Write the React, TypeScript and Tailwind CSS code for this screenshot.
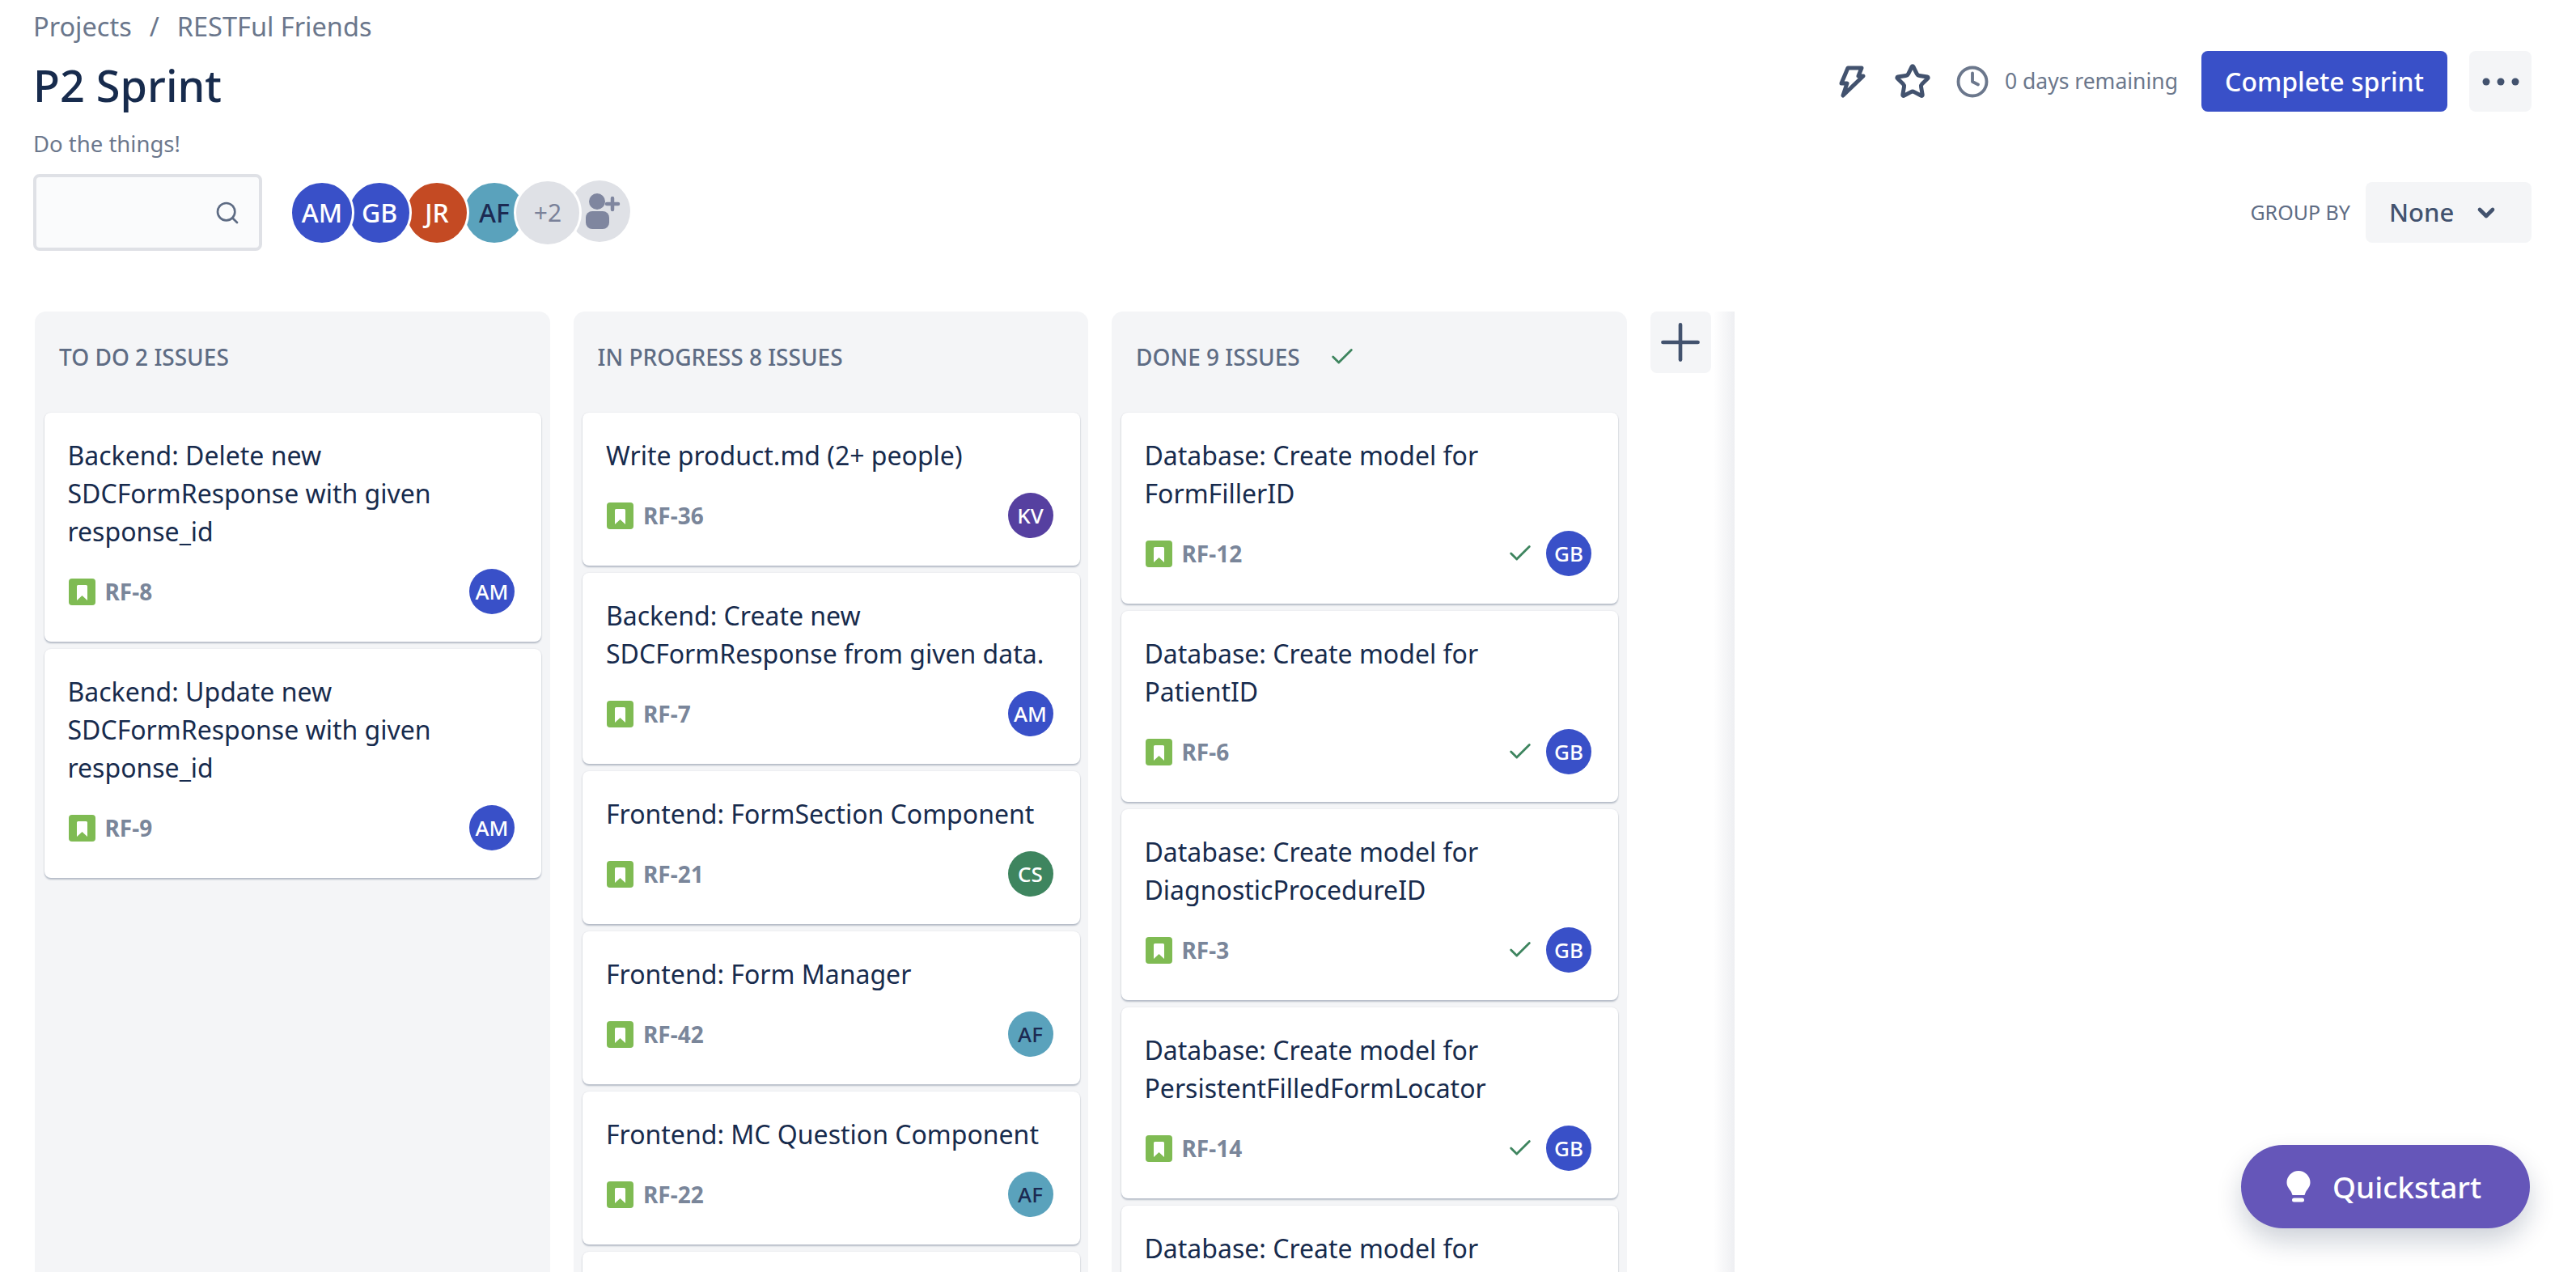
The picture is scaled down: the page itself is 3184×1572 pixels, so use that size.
import { Check, ChevronDown, Clock, Plus, Search, Star } from "lucide-react";

type Person = "AM" | "GB" | "JR" | "AF" | "KV" | "CS";

// the last card of a column runs off the page, so it has no footer here
interface Issue {
  title: string[];
  id?: string;
  who?: Person;
}

const avatarColors: Record<Person, string> = {
  AM: "bg-[#3950c8] text-white",
  GB: "bg-[#3950c8] text-white",
  JR: "bg-[#c44a23] text-white",
  AF: "bg-[#5aa2bc] text-[#1c2a52]",
  KV: "bg-[#5640a0] text-white",
  CS: "bg-[#3e855f] text-white",
};

const columns: { name: string; done?: boolean; issues: Issue[] }[] = [
  {
    name: "TO DO 2 ISSUES",
    issues: [
      { title: ["Backend: Delete new", "SDCFormResponse with given", "response_id"], id: "RF-8", who: "AM" },
      { title: ["Backend: Update new", "SDCFormResponse with given", "response_id"], id: "RF-9", who: "AM" },
    ],
  },
  {
    name: "IN PROGRESS 8 ISSUES",
    issues: [
      { title: ["Write product.md (2+ people)"], id: "RF-36", who: "KV" },
      { title: ["Backend: Create new", "SDCFormResponse from given data."], id: "RF-7", who: "AM" },
      { title: ["Frontend: FormSection Component"], id: "RF-21", who: "CS" },
      { title: ["Frontend: Form Manager"], id: "RF-42", who: "AF" },
      { title: ["Frontend: MC Question Component"], id: "RF-22", who: "AF" },
      { title: [] },
    ],
  },
  {
    name: "DONE 9 ISSUES",
    done: true,
    issues: [
      { title: ["Database: Create model for", "FormFillerID"], id: "RF-12", who: "GB" },
      { title: ["Database: Create model for", "PatientID"], id: "RF-6", who: "GB" },
      { title: ["Database: Create model for", "DiagnosticProcedureID"], id: "RF-3", who: "GB" },
      { title: ["Database: Create model for", "PersistentFilledFormLocator"], id: "RF-14", who: "GB" },
      { title: ["Database: Create model for"] },
    ],
  },
];

function StoryIcon() {
  return (
    <svg width="33" height="33" viewBox="0 0 33 33" className="ml-[1px] shrink-0">
      <rect width="33" height="33" rx="4" fill="#7fbb53" />
      <path d="M10 9.500a1.500 1.500 0 0 1 1.500-1.500h10a1.500 1.500 0 0 1 1.500 1.500V27l-6.500-6L10 27z" fill="#fff" />
    </svg>
  );
}

function BoltIcon() {
  return (
    <svg width="36" height="46" viewBox="20 18 36 46" fill="none" stroke="#42526e" strokeWidth="5" strokeLinejoin="round">
      <path d="M32 24h17l-4 10h6L26 58l5-15h-7z" />
    </svg>
  );
}

function AddPersonIcon() {
  return (
    <svg width="76" height="76" viewBox="0 0 76 76">
      <circle cx="35" cy="26" r="10" fill="#7f869f" />
      <rect x="21" y="38" width="29" height="22" rx="8" fill="#7f869f" />
      <path d="M47 29h14M54 22v14" stroke="#7f869f" strokeWidth="4.500" strokeLinecap="round" />
    </svg>
  );
}

function DotsIcon() {
  return (
    <svg width="48" height="12" viewBox="0 0 48 12" fill="#42526e">
      <circle cx="6" cy="6" r="4.500" />
      <circle cx="24" cy="6" r="4.500" />
      <circle cx="42" cy="6" r="4.500" />
    </svg>
  );
}

function BulbIcon() {
  return (
    <svg width="30" height="39" viewBox="0 0 30 39" fill="#fff" className="shrink-0">
      <path d="M15 0a14.500 14.500 0 0 1 14.500 14.500c0 5-3.500 8-5.500 11.500l-1.500 4h-15l-1.500-4C4 22.500.5 19.500.5 14.500A14.500 14.500 0 0 1 15 0z" />
      <rect x="7" y="33.500" width="15" height="5" rx="2.500" />
    </svg>
  );
}

function IssueCard({ issue, done }: { issue: Issue; done?: boolean }) {
  return (
    <div className="shrink-0 rounded-lg bg-white pl-[29px] pr-[33px] pt-[29px] pb-[34px] shadow-[0_2px_2px_rgba(9,30,66,0.25),0_0_2px_rgba(9,30,66,0.1)]">
      <div className="text-[32px] leading-[47px] text-[#172b4d]">
        {issue.title.map((line) => (
          <div key={line} className="whitespace-nowrap">{line}</div>
        ))}
      </div>
      {issue.id && issue.who && (
        <div className="mt-[23px] flex h-[56px] items-center">
          <StoryIcon />
          <span className="ml-3 text-[28px] font-bold text-[#7a869a]">{issue.id}</span>
          <div className="ml-auto flex items-center gap-[15px]">
            {done && <Check size={34} strokeWidth={2} className="text-[#3e855f]" />}
            <div className={`flex size-[56px] items-center justify-center rounded-full text-[26px] font-medium ${avatarColors[issue.who]}`}>
              {issue.who}
            </div>
          </div>
        </div>
      )}
    </div>
  );
}

function Column({ name, done, issues }: { name: string; done?: boolean; issues: Issue[] }) {
  return (
    <div className="flex w-[636.5px] shrink-0 flex-col rounded-t-[14px] bg-[#f4f5f7] pl-[11.5px] pr-[10.5px]">
      <div className="-ml-[11.5px] flex h-[125px] shrink-0 items-center pb-[13px] pl-[30px]">
        <span className="text-[28px] font-medium text-[#5e6c84]">{name}</span>
        {done && <Check size={34} strokeWidth={2} className="ml-[35px] text-[#3e855f]" />}
      </div>
      <div className="flex flex-col gap-[9px]">
        {issues.map((issue, i) => (
          <IssueCard key={i} issue={issue} done={done} />
        ))}
      </div>
    </div>
  );
}

export default function App() {
  return (
    <div className="relative flex h-[1572px] w-[3184px] flex-col overflow-hidden bg-white font-['Noto_Sans',sans-serif]">
      <div className="flex items-start justify-between pl-[41px] pr-[55px]">
        <div>
          <div className="flex h-[66px] items-center text-[32.5px] text-[#6b778c]">
            <span>Projects</span>
            <span className="mx-[22px]">/</span>
            <span>RESTFul Friends</span>
          </div>
          <h1 className="flex h-[78px] items-center text-[54px] font-medium text-[#172b4d]">P2 Sprint</h1>
        </div>
        <div className="mt-[63px] flex h-[75px] items-center">
          <BoltIcon />
          <Star size={46} strokeWidth={2.600} className="ml-[33px] text-[#42526e]" />
          <Clock size={42} strokeWidth={2.200} className="ml-[30px] text-[#6b778c]" />
          <span className="ml-[19px] text-[26.500px] text-[#6b778c]">0 days remaining</span>
          <button className="ml-[29px] flex h-[75px] w-[304px] items-center justify-center rounded-lg bg-[#3950c8] text-[32px] font-medium text-white">
            Complete sprint
          </button>
          <button className="ml-[27px] flex h-[75px] w-[77px] items-center justify-center rounded-lg bg-[#f4f5f7]">
            <DotsIcon />
          </button>
        </div>
      </div>

      <div className="flex h-[68px] items-center pl-[41px] text-[27.500px] text-[#6b778c]">Do the things!</div>

      <div className="mt-[3px] flex h-[95px] items-center pl-[41px] pr-[55px]">
        <div className="flex h-[95px] w-[283px] items-center justify-end rounded-lg border-4 border-[#dfe1e6] bg-[#fafbfc] pr-[23px]">
          <Search size={32} strokeWidth={2} className="text-[#5e6c84]" />
        </div>
        <div className="ml-[34px] flex items-center text-[32px] font-medium">
          <div className={`relative z-40 flex size-[80px] items-center justify-center rounded-full border-[3px] border-white ${avatarColors.AM}`}>AM</div>
          <div className={`relative z-30 -ml-[9px] flex size-[80px] items-center justify-center rounded-full border-[3px] border-white ${avatarColors.GB}`}>GB</div>
          <div className={`relative z-20 -ml-[9px] flex size-[80px] items-center justify-center rounded-full border-[3px] border-white ${avatarColors.JR}`}>JR</div>
          <div className={`relative z-10 -ml-[9px] flex size-[80px] items-center justify-center rounded-full border-[3px] border-white ${avatarColors.AF}`}>AF</div>
          <div className="relative z-20 -ml-[16px] flex size-[84px] items-center justify-center rounded-full border-[3px] border-white bg-[#dfe1e6] text-[30px] font-normal text-[#7a8199]">+2</div>
          <div className="relative z-10 -ml-[16px] -mt-[4px] size-[76px] rounded-full bg-[#dfe1e6]">
            <AddPersonIcon />
          </div>
        </div>
        <span className="ml-auto text-[25px] text-[#5e6c84]">GROUP BY</span>
        <div className="ml-[19px] flex h-[75px] w-[205px] items-center rounded-lg bg-[#f4f5f7] pl-[29px] text-[31px] font-medium text-[#42526e]">
          None
          <ChevronDown size={32} strokeWidth={3.500} className="ml-[24px]" />
        </div>
      </div>

      <div className="mt-[75px] flex min-h-0 flex-1 gap-[29px] pl-[43px]">
        {columns.map((col) => (
          <Column key={col.name} name={col.name} done={col.done} issues={col.issues} />
        ))}
        <div className="flex">
          <button className="flex h-[76px] w-[75px] items-center justify-center rounded-lg bg-[#f4f5f7] text-[#42526e]">
            <Plus size={74} strokeWidth={1.500} />
          </button>
          <div className="ml-[3px] w-[26px] bg-gradient-to-r from-white to-[#eeeff2]" />
        </div>
      </div>

      {/* floating help button */}
      <button className="absolute left-[2770px] top-[1415px] flex h-[103px] w-[357px] items-center rounded-full bg-[#6556b9] pl-[56px] text-[37px] font-medium text-white shadow-[0_16px_32px_rgba(9,30,66,0.2)]">
        <BulbIcon />
        <span className="ml-[27px]">Quickstart</span>
      </button>
    </div>
  );
}
